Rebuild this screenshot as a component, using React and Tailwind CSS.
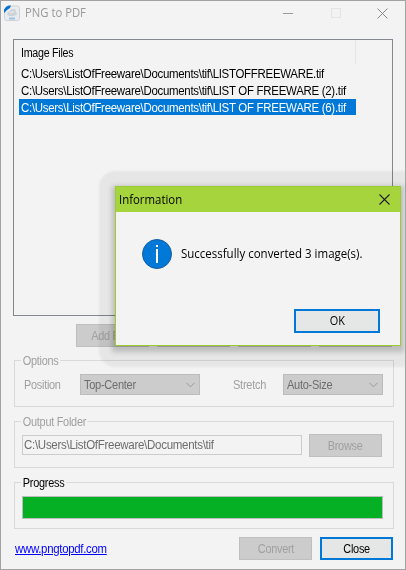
import clsx from 'clsx'

const files = [
  'C:\\Users\\ListOfFreeware\\Documents\\tif\\LISTOFFREEWARE.tif',
  'C:\\Users\\ListOfFreeware\\Documents\\tif\\LIST OF FREEWARE (2).tif',
  'C:\\Users\\ListOfFreeware\\Documents\\tif\\LIST OF FREEWARE (6).tif',
]

const toolbar = ['Add Files', 'Add Folder', 'Remove', 'Clear']

function Button({ children, primary, className }) {
  return (
    <button
      className={clsx(
        'h-[23px] w-[73px] shrink-0 text-center',
        primary ? 'border-2 border-[#0078d7] bg-[#e5e7e6] text-black' : 'border border-[#bfbfbf] bg-[#cccccc] text-[#a0a0a0]',
        className
      )}
    >
      <span className="inline-block scale-x-[0.91]">{children}</span>
    </button>
  )
}

function Group({ title, dark, className, children }) {
  return (
    <div className={clsx('relative ml-[14px] h-[47px] w-[380px] border border-[#d9d9d9]', className)}>
      <span
        className={clsx(
          'absolute -top-2 left-[6px] origin-left scale-x-[0.91] whitespace-nowrap bg-[#f3f3f3] px-[2px] leading-4',
          dark ? 'text-black' : 'text-[#a0a0a0]'
        )}
      >
        {title}
      </span>
      {children}
    </div>
  )
}

function Select({ value, className }) {
  return (
    <div className={clsx('flex h-[21px] items-center justify-between border border-[#bcbcbc] bg-[#cccccc] pl-[3px] pr-1 text-[#6d6d6d]', className)}>
      <span className="origin-left scale-x-[0.92]">{value}</span>
      <svg width="9" height="6" viewBox="0 0 9 6" fill="none" stroke="#9a9a9a">
        <path d="M0.5 0.8 4.5 4.8 8.5 0.8" />
      </svg>
    </div>
  )
}

function AppIcon() {
  return (
    <svg width="16" height="16" viewBox="0 0 16 16">
      <path d="M6.5 1H13.5Q15.5 1 15.5 3V13.5Q15.5 15.5 13.5 15.5H2.5Q0.5 15.5 0.5 13.5V7Z" fill="#e9ecef" stroke="#cfd3d7" />
      <path d="M0 8V4.500Q2 1 4.500 0.5H7L6 3 3 5Z" fill="#0b70cc" />
      <path d="M3 9.5Q3 7 5.5 6.5 6 3.5 9 4 12 4 12 7 13.5 8 12.5 10 8 12 4 10.5Z" fill="#cdd2d6" />
      <path d="M6 8.5Q7.5 6 10 7" fill="none" stroke="#f6f7f8" />
      <path d="M5 13.5H11" stroke="#9cc3e4" strokeWidth="2" />
    </svg>
  )
}

function Dialog() {
  return (
    <>
      {/* outer halo around the dialog */}
      <div className="absolute left-[98px] top-[170px] h-[196px] w-[322px] rounded-[16px] bg-black/5 blur-[1px]" />
      <div className="absolute left-[114px] top-[185px] h-[160px] w-[286px] border border-[#9bcb32] bg-[#f3f3f3] font-['Open_Sans','Noto_Sans',sans-serif] text-[12px] tracking-normal text-black shadow-[0_3px_5px_3px_rgba(0,0,0,0.18)]">
        <div className="flex h-[25px] items-center justify-between bg-[#a5d43c] pl-[3px] pr-[10px]">
          <span className="origin-left scale-x-[0.95]">Information</span>
          <svg width="11" height="11" viewBox="0 0 11 11" stroke="#222" strokeWidth="1.1">
            <path d="M0.5 0.5 10.5 10.5M10.5 0.5 0.5 10.5" />
          </svg>
        </div>
        <div className="flex items-center pl-[26px] pt-[27px]">
          <svg width="30" height="30" viewBox="0 0 30 30">
            <circle cx="15" cy="15" r="14.5" fill="#0078d7" stroke="#155f9e" />
            <path d="M14 6h2v2h-2zM14 10h2v14h-2z" fill="#fff" />
          </svg>
          <span className="ml-[9px] origin-left scale-x-[0.957] whitespace-nowrap">Successfully converted 3 image(s).</span>
        </div>
        <Button primary className="ml-[178px] mt-[40px] h-6! w-[86px]!">OK</Button>
      </div>
    </>
  )
}

export default function App() {
  return (
    <div className="relative flex h-[570px] w-[406px] flex-col overflow-hidden border border-[#a3a3a3] bg-[#f3f3f3] font-['Liberation_Sans',Arial,sans-serif] text-[12px] leading-4 tracking-[-0.3px]">
      <div className="flex h-[38px] pl-[3px] pt-[4px]">
        <AppIcon />
        <span className="ml-[5px] origin-left scale-x-[0.94] self-start font-['Open_Sans',sans-serif] tracking-normal text-[#999]">PNG to PDF</span>
        <svg className="ml-auto mr-[17px] mt-[3px]" width="105" height="11" viewBox="0 0 105 11" fill="none">
          <path d="M0 5.5H10" stroke="#999" />
          <rect x="48.5" y="0.5" width="9" height="9" stroke="#e4e4e4" />
          <path d="M94.5 0.5 104.5 10.5M104.5 0.5 94.5 10.5" stroke="#888" />
        </svg>
      </div>

      {/* File list */}
      <div className="ml-[12px] h-[277px] w-[380px] shrink-0 border border-[#828790] text-black">
        <div className="flex h-6 w-[342px] items-center border-r border-[#e5e5e5] pl-[7px] pt-[2px]">
          <span className="origin-left scale-x-[0.89]">Image Files</span>
        </div>
        {files.map((file, i) => (
          <div key={file} className={clsx('ml-[5px] mt-px h-4 w-[337px] whitespace-nowrap pl-[2px] leading-[18px]', i === 2 && 'bg-[#0078d7] text-white')}>
            <span className="inline-block origin-left scale-x-[0.955]">{file}</span>
          </div>
        ))}
      </div>

      <div className="ml-[75px] mt-2 flex gap-2">
        {toolbar.map(label => <Button key={label}>{label}</Button>)}
      </div>

      <div className="-ml-px flex flex-col">
        <Group title="Options" className="mt-[13px]">
          <div className="flex items-center pl-[9px] pt-[13px] text-[#a0a0a0]">
            <span className="w-[56px] origin-left scale-x-[0.91]">Position</span>
            <Select value="Top-Center" className="w-[120px]" />
            <span className="ml-[33px] w-[50px] origin-left scale-x-[0.92]">Stretch</span>
            <Select value="Auto-Size" className="w-[100px]" />
          </div>
        </Group>

        <Group title="Output Folder" className="mt-[14px]">
          <div className="flex pl-[7px] pt-3">
            <div className="mt-px h-5 w-[280px] border border-[#cccccc] pl-px leading-[18px] text-[#6d6d6d]">
              <span className="inline-block origin-left scale-x-[0.96]">{'C:\\Users\\ListOfFreeware\\Documents\\tif'}</span>
            </div>
            <Button className="ml-[7px]">Browse</Button>
          </div>
        </Group>

        <Group title="Progress" dark className="mt-[14px]">
          <div className="ml-[7px] mt-[13px] h-[23px] w-[361px] border border-[#bcbcbc] bg-[#06b025]" />
        </Group>
      </div>

      <div className="mt-2 flex pl-[14px]">
        <span className="mt-1 w-[224px]">
          <a className="inline-block origin-left scale-x-[0.95] text-[#0000ff] underline">www.pngtopdf.com</a>
        </span>
        <Button>Convert</Button>
        <Button primary className="ml-2">Close</Button>
      </div>

      <Dialog />
    </div>
  )
}
